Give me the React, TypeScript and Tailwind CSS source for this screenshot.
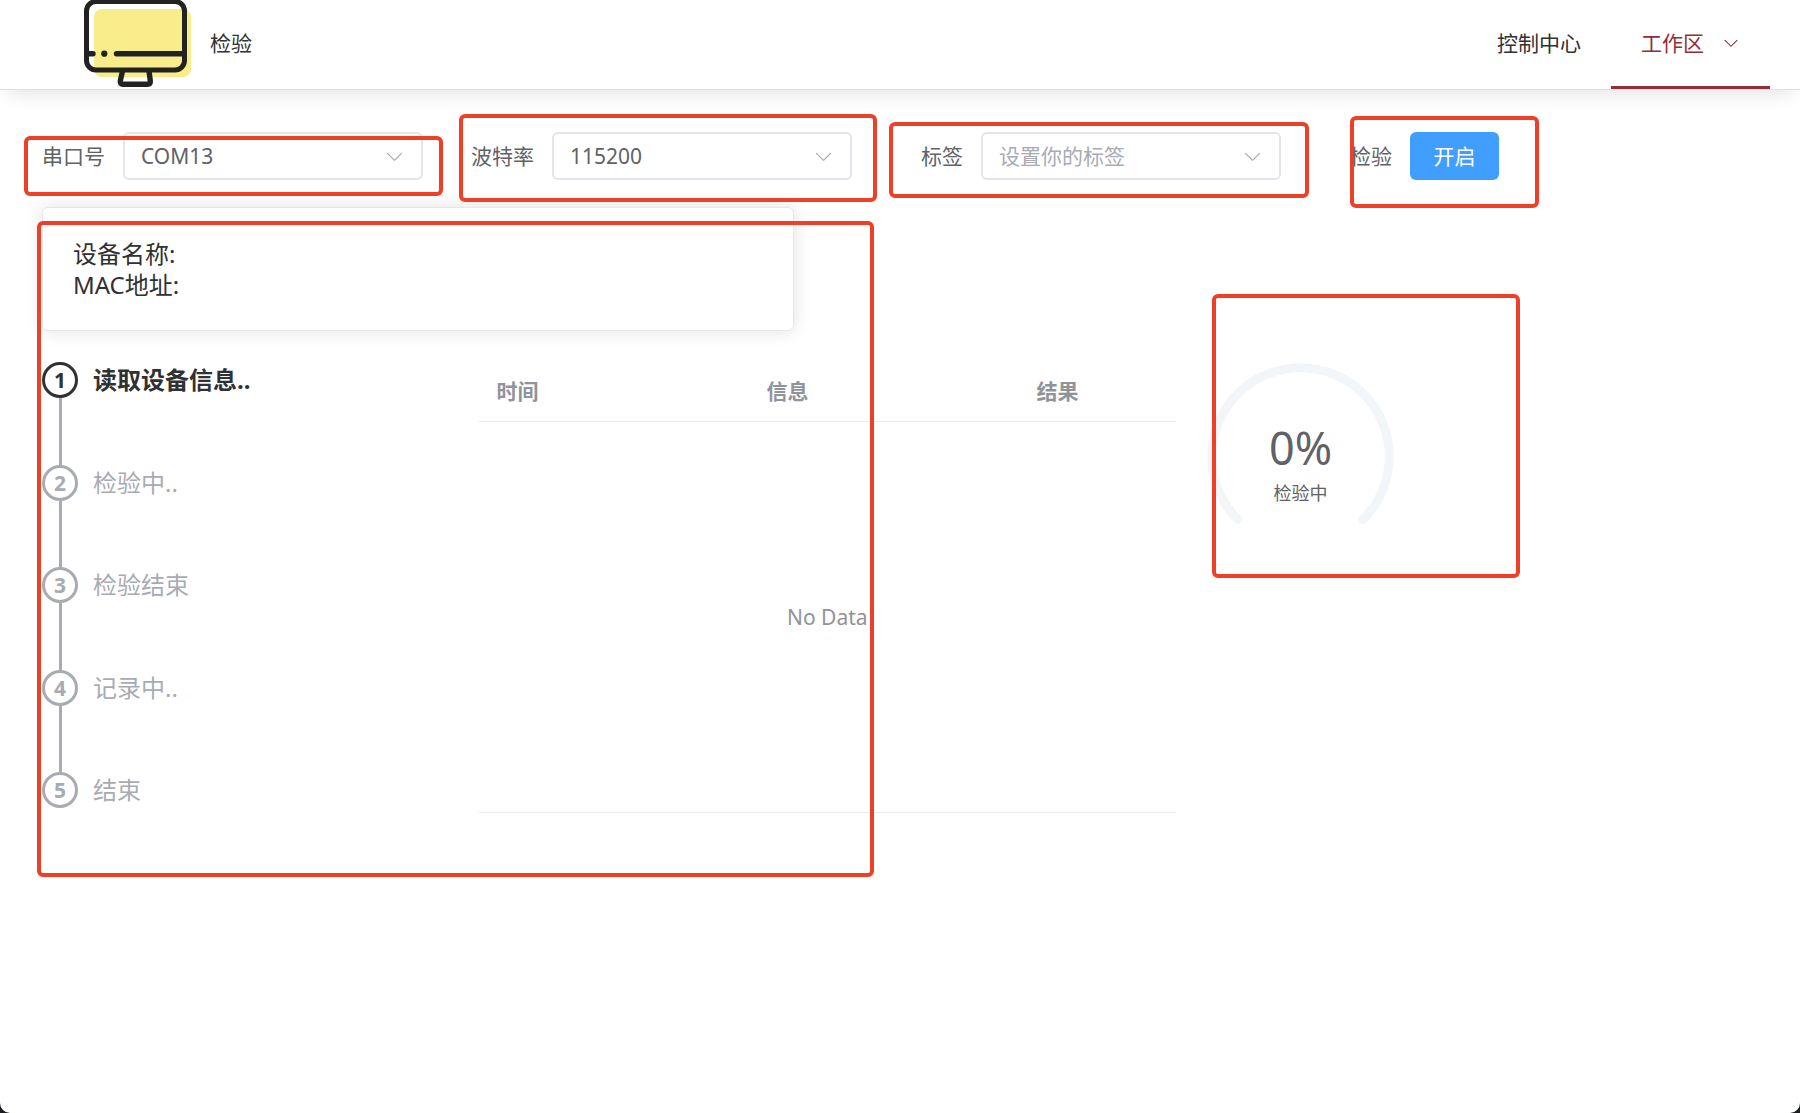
import { ReactNode } from 'react';

const steps = ['读取设备信息..', '检验中..', '检验结束', '记录中..', '结束'];

function ArrowDown({ className }: { className: string }) {
  return (
    <svg viewBox="0 0 1024 1024" fill="currentColor" aria-hidden="true" className={className}>
      <path d="M831.872 340.864 512 652.672 192.128 340.864a30.592 30.592 0 0 0-42.752 0 29.12 29.12 0 0 0 0 41.6L489.664 714.24a32 32 0 0 0 44.672 0l340.288-331.712a29.12 29.12 0 0 0 0-41.728 30.592 30.592 0 0 0-42.752 0z" />
    </svg>
  );
}

function Logo() {
  return (
    <svg viewBox="0 0 108 89" aria-hidden="true" className="h-[89px] w-[108px] shrink-0">
      <rect x="10" y="9" width="97" height="68" rx="8" fill="#f8ec8b" />
      <rect x="2.5" y="1.5" width="98" height="68.5" rx="9.5" fill="none" stroke="#222" strokeWidth="5" />
      <g stroke="#222" strokeWidth="5.4" strokeLinecap="round" strokeLinejoin="round" fill="none">
        <path d="M3 53.7H9" />
        <path d="M32.5 53.7H100" />
        <path d="M38.5 71 36.3 81Q36 84.3 39 84.3H63.500Q66.800 84.300 66.300 81L65 71" />
      </g>
      <circle cx="20.300" cy="53.700" r="3.100" fill="#222" />
    </svg>
  );
}

/* Red outline that marks a region of the page. */
function Marker({ className }: { className: string }) {
  return (
    <div
      aria-hidden="true"
      className={`pointer-events-none absolute z-10 rounded-md border-4 border-[#ee4026] ${className}`}
    />
  );
}

function Field({ id, label, children, marker }: { id: string; label: string; children: ReactNode; marker: string }) {
  return (
    <div className="relative flex h-12 items-center">
      <label htmlFor={id} className="w-[81px] pr-[18px] text-right text-[#606266]">
        {label}
      </label>
      {children}
      <Marker className={marker} />
    </div>
  );
}

function Select({ id, value, placeholder }: { id: string; value: string; placeholder?: boolean }) {
  return (
    <div className="relative">
      <select
        id={id}
        className={`h-12 w-[300px] appearance-none rounded-md border-2 border-[#dcdfe6]/80 bg-white px-4 outline-none ${
          placeholder ? 'text-[#a8abb2]' : 'text-[#606266]'
        }`}
      >
        <option>{value}</option>
      </select>
      <ArrowDown className="pointer-events-none absolute top-[14px] right-[18px] size-[21px] text-[#a8abb2]" />
    </div>
  );
}

export default function App() {
  return (
    <div className="bg-[#1c1d22]">
      <div className="min-h-screen rounded-b-[10px] bg-white font-['Noto_Sans','Noto_Sans_CJK_SC',sans-serif] text-[21px] leading-[30px] text-[#303133]">
        <header className="flex items-stretch justify-between border-b border-[#dcdfe6] bg-white pr-[30px] pl-[84px] shadow-[0_12px_18px_-8px_rgba(0,0,0,0.11)]">
          <div className="flex items-center gap-[18px]">
            <Logo />
            <span className="pb-[3px]">检验</span>
          </div>
          <nav className="flex">
            <a href="#control" className="flex items-center border-b-3 border-transparent px-[30px]">
              控制中心
            </a>
            <button
              type="button"
              className="flex items-center gap-[18px] border-b-3 border-[#932d38] px-[30px] text-[#932d38]"
            >
              工作区
              <ArrowDown className="size-[18px]" />
            </button>
          </nav>
        </header>

        <main className="px-[42px] pt-[42px]">
          <form className="flex flex-wrap gap-x-12 gap-y-6">
            <Field id="port" label="串口号" marker="-left-[18px] -right-5 top-1 -bottom-4">
              <Select id="port" value="COM13" />
            </Field>
            <Field id="baud" label="波特率" marker="-left-3 -right-[25px] -top-[18px] -bottom-[22px]">
              <Select id="baud" value="115200" />
            </Field>
            <Field id="tag" label="标签" marker="-left-[11px] -right-7 -top-[10px] -bottom-[18px]">
              <Select id="tag" value="设置你的标签" placeholder />
            </Field>
            <Field id="start" label="检验" marker="left-[21px] -right-10 -top-4 -bottom-7">
              <button id="start" type="button" className="h-12 w-[89px] rounded-md bg-[#409eff] text-white">
                开启
              </button>
            </Field>
          </form>

          <div className="relative mt-[27px]">
            <section className="max-w-[752px] rounded-md border border-[#e4e7ed] bg-white p-[30px] text-2xl leading-[31px] shadow-[0_0_18px_rgba(0,0,0,0.12)]">
              <p>设备名称:</p>
              <p>MAC地址:</p>
            </section>

            <div className="mt-[31px] grid grid-cols-24 gap-x-[30px]">
              <ol className="col-span-6 flex h-[446px] flex-col text-2xl leading-9">
                {steps.map((step, i) => (
                  <li
                    key={step}
                    className={`flex gap-[15px] last:flex-none ${
                      i === 0 ? 'flex-1 font-bold text-[#303133]' : 'flex-1 text-[#a8abb2]'
                    }`}
                  >
                    <div className="flex flex-col items-center">
                      <span className="flex size-9 shrink-0 items-center justify-center rounded-full border-3 border-current text-[21px] font-bold">
                        {i + 1}
                      </span>
                      {i < steps.length - 1 && <span className="w-[3px] flex-1 bg-[#a8abb2]" />}
                    </div>
                    <span>{step}</span>
                  </li>
                ))}
              </ol>

              <table className="col-span-10 h-[451px] w-full table-fixed border-collapse self-start text-[#909399]">
                <thead>
                  <tr className="h-[59px] border-b border-[#ebeef0] text-left">
                    <th className="w-[270px] px-[18px]">时间</th>
                    <th className="w-[270px] px-[18px]">信息</th>
                    <th className="px-[18px]">结果</th>
                  </tr>
                </thead>
                <tbody>
                  <tr className="border-b border-[#ebeef0]">
                    <td colSpan={3} className="text-center">
                      No Data
                    </td>
                  </tr>
                </tbody>
              </table>

              <div className="relative col-span-8">
                <div className="relative size-[189px]">
                  <svg viewBox="0 0 100 100" aria-hidden="true" className="size-full">
                    <circle
                      cx="50"
                      cy="50"
                      r="47"
                      fill="none"
                      stroke="#f3f6f9"
                      strokeWidth="4.800"
                      strokeLinecap="round"
                      strokeDasharray="221.500 295.300"
                      transform="rotate(135 50 50)"
                    />
                  </svg>
                  <div className="absolute inset-0 flex flex-col items-center justify-center pt-3 text-[#606266]">
                    <span className="text-[45px] leading-[60px]">0%</span>
                    <span className="text-lg leading-[30px]">检验中</span>
                  </div>
                </div>
                <Marker className="-top-[68px] left-[6px] h-[284px] w-[308px]" />
              </div>
            </div>
            <Marker className="top-[14px] -bottom-16 -left-[5px] w-[837px]" />
          </div>
        </main>
      </div>
    </div>
  );
}
